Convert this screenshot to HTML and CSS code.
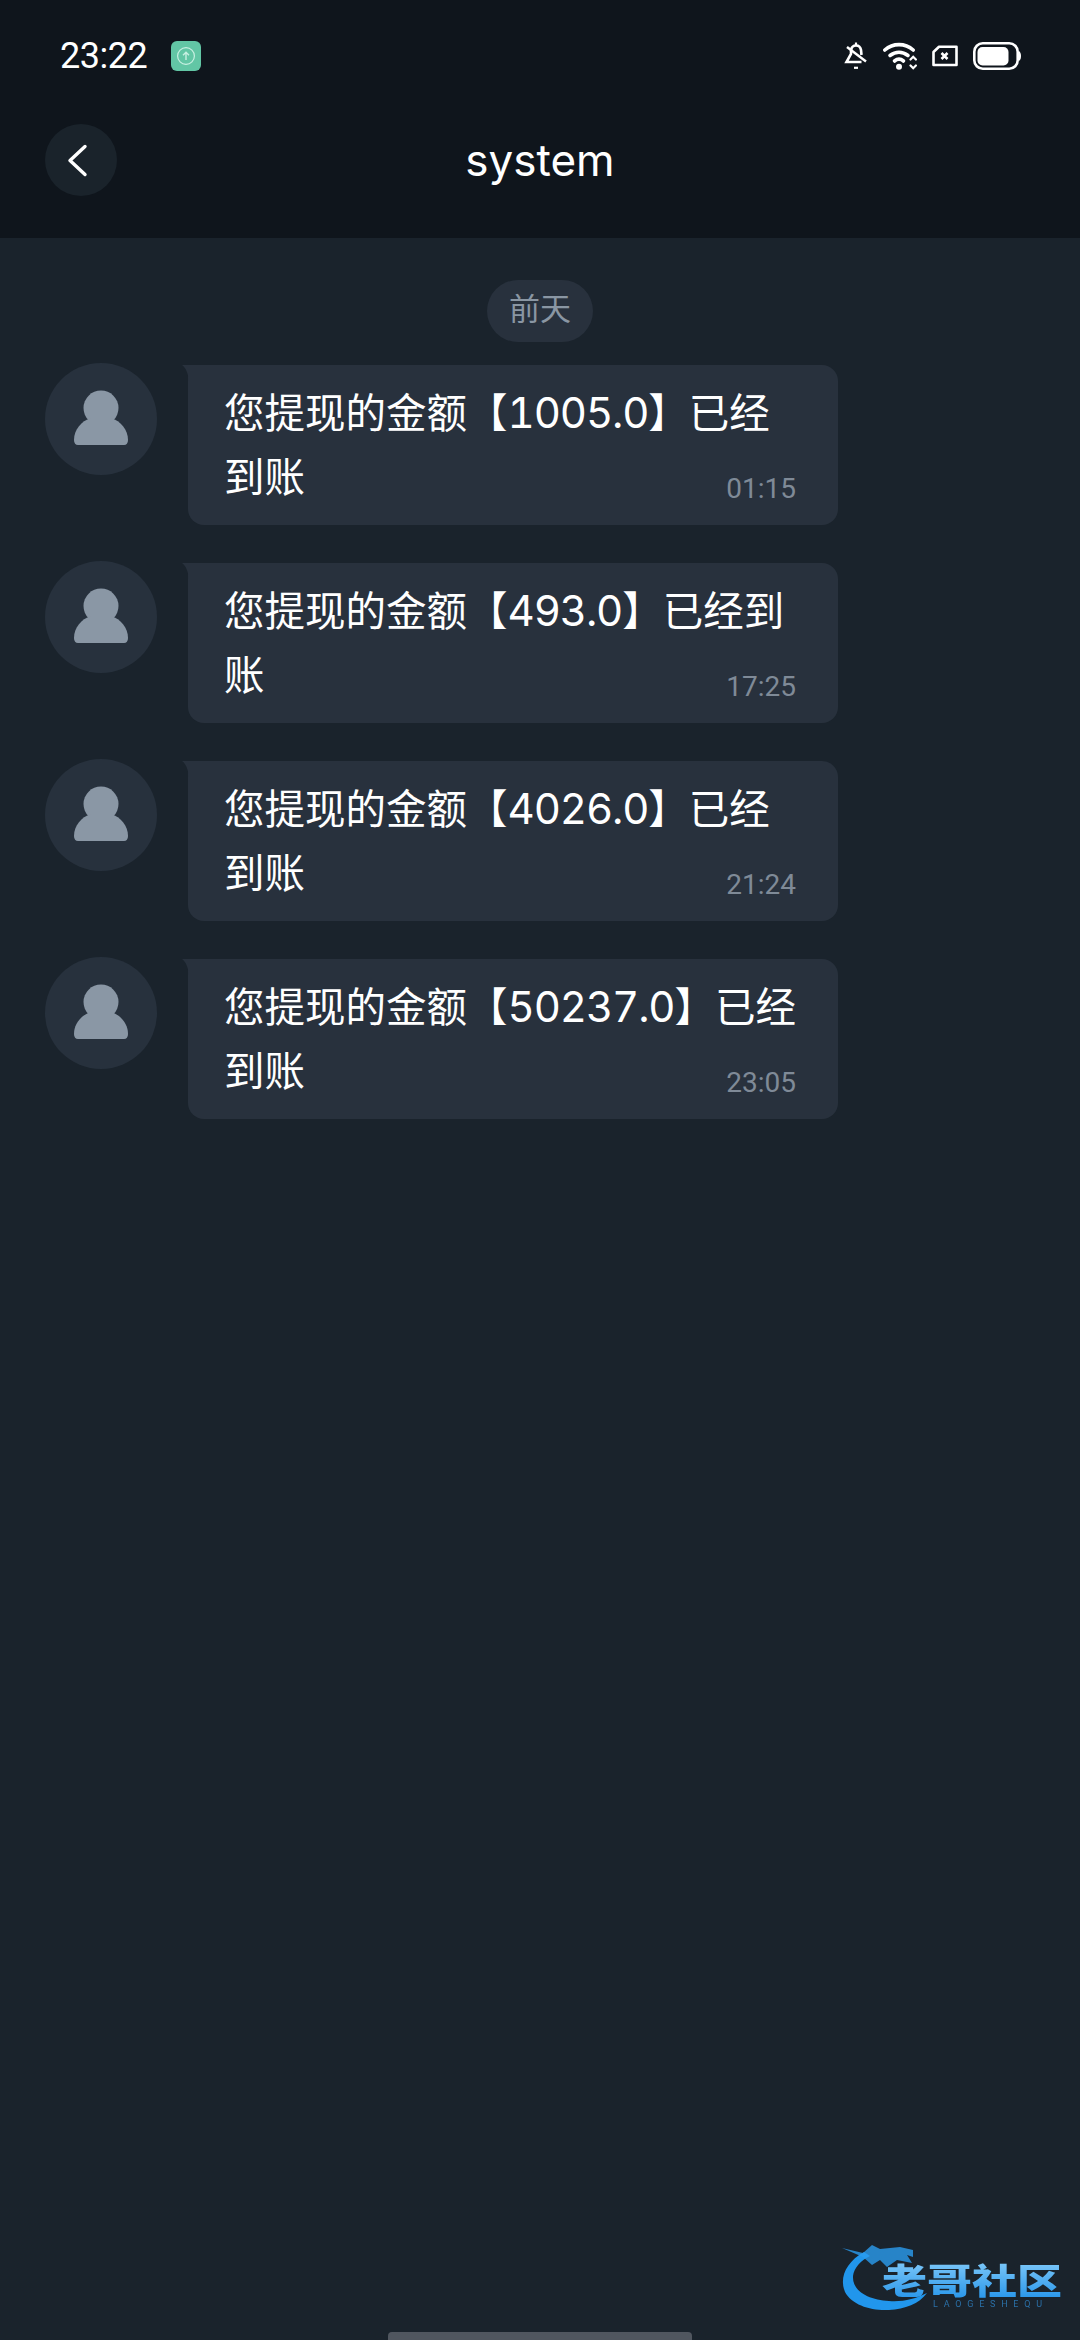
FILE: index.html
```html
<!DOCTYPE html>
<html lang="zh-CN">

<head>
    <meta charset="UTF-8">
    <meta name="viewport" content="width=device-width, initial-scale=1.0">
    <title>system</title>
    <link rel="stylesheet" href="styles.css">
</head>

<body>
    <div class="page">
        <div class="top">
            <div class="status-bar">
                <span class="clock">23:22</span>
                <span class="app-badge">
                    <svg width="20" height="20" viewBox="0 0 20 20" fill="none" stroke="#c8f0e2" stroke-width="1.2">
                        <circle cx="10" cy="10" r="8.4"/>
                        <path d="M10 14V6.4M7 9.2l3-3 3 3" stroke-width="1.4"/>
                    </svg>
                </span>
                <div class="status-icons">
                    <!-- muted bell -->
                    <svg width="24" height="28" viewBox="0 0 24 28" fill="none" stroke="#fff" stroke-width="2.6">
                        <path d="M7 8c.6-3 2.500-4.500 5-4.500s4.500 1.500 5 4.500l.5 5"/>
                        <path d="M7 7.500V12l-4.500 8h15"/>
                        <path d="M3 5l19 14.500" stroke-width="2.400"/>
                        <path d="M10 25.800h4" stroke-width="2.200"/>
                        <path d="M12 .5v3" stroke-width="2.200"/>
                    </svg>
                    <!-- wifi with up and down arrows -->
                    <svg width="34" height="28" viewBox="0 0 34 28" fill="none" stroke="#fff" stroke-width="3.600" stroke-linecap="round">
                        <path d="M1.800 8C10 .8 22 .8 30.200 8"/>
                        <path d="M7 13.500c5.500-4.200 12.500-4.200 18 0"/>
                        <path d="M11.500 19c3-2.400 6-2.400 9 0"/>
                        <circle cx="16" cy="24.800" r="3" fill="#fff" stroke="none"/>
                        <path d="M27.500 17.500l2.700-2.700 2.700 2.700M27.500 23.500l2.700 2.700 2.700-2.700" stroke-width="2.200"/>
                    </svg>
                    <!-- no sim -->
                    <svg width="26" height="22" viewBox="0 0 26 22" fill="none" stroke="#fff" stroke-width="2.600">
                        <path d="M7 1.800H24.500V20H1.500V7z" stroke-linejoin="round"/>
                        <path d="M9.500 8l6 6M15.500 8l-6 6" stroke-width="2.600"/>
                    </svg>
                    <!-- battery -->
                    <svg width="48" height="28" viewBox="0 0 48 28" fill="none">
                        <rect x="1.300" y="1.300" width="43.400" height="25.400" rx="8.500" stroke="#fff" stroke-width="2.600"/>
                        <rect x="4.500" y="5" width="31" height="18.500" rx="5" fill="#fff"/>
                        <path d="M46 9c1.500 1 2 3 2 5s-.5 4-2 5z" fill="#fff"/>
                    </svg>
                </div>
            </div>
            <div class="nav-bar">
                <button class="back-btn">
                    <svg width="21" height="33" viewBox="0 0 21 33" fill="none" stroke="#fff" stroke-width="3.400" stroke-linecap="round" stroke-linejoin="round">
                        <path d="M18 2.500L3 16.500l15 14"/>
                    </svg>
                </button>
                <h1 class="nav-title">system</h1>
            </div>
        </div>

        <div class="chat">
            <div class="day-row"><span class="day-pill">前天</span></div>

            <div class="msg">
                <div class="avatar">
                    <svg width="56" height="56" viewBox="0 0 56 56"><circle cx="28" cy="18" r="17.500" fill="#8a97a5"/><path d="M18 28C8 31 1 40 1 50c0 3 1.500 5 4 5h46c2.500 0 4-2 4-5 0-10-7-19-17-22z" fill="#8a97a5"/></svg>
                </div>
                <div class="bubble">
                    <p class="bubble-text">您提现的金额【<span class="amount">1005.0</span>】已经</p>
                    <div class="bubble-last">
                        <p class="bubble-text">到账</p>
                        <span class="bubble-time">01:15</span>
                    </div>
                </div>
            </div>

            <div class="msg">
                <div class="avatar">
                    <svg width="56" height="56" viewBox="0 0 56 56"><circle cx="28" cy="18" r="17.500" fill="#8a97a5"/><path d="M18 28C8 31 1 40 1 50c0 3 1.500 5 4 5h46c2.500 0 4-2 4-5 0-10-7-19-17-22z" fill="#8a97a5"/></svg>
                </div>
                <div class="bubble">
                    <p class="bubble-text">您提现的金额【<span class="amount">493.0</span>】已经到</p>
                    <div class="bubble-last">
                        <p class="bubble-text">账</p>
                        <span class="bubble-time">17:25</span>
                    </div>
                </div>
            </div>

            <div class="msg">
                <div class="avatar">
                    <svg width="56" height="56" viewBox="0 0 56 56"><circle cx="28" cy="18" r="17.500" fill="#8a97a5"/><path d="M18 28C8 31 1 40 1 50c0 3 1.500 5 4 5h46c2.500 0 4-2 4-5 0-10-7-19-17-22z" fill="#8a97a5"/></svg>
                </div>
                <div class="bubble">
                    <p class="bubble-text">您提现的金额【<span class="amount">4026.0</span>】已经</p>
                    <div class="bubble-last">
                        <p class="bubble-text">到账</p>
                        <span class="bubble-time">21:24</span>
                    </div>
                </div>
            </div>

            <div class="msg">
                <div class="avatar">
                    <svg width="56" height="56" viewBox="0 0 56 56"><circle cx="28" cy="18" r="17.500" fill="#8a97a5"/><path d="M18 28C8 31 1 40 1 50c0 3 1.500 5 4 5h46c2.500 0 4-2 4-5 0-10-7-19-17-22z" fill="#8a97a5"/></svg>
                </div>
                <div class="bubble">
                    <p class="bubble-text">您提现的金额【<span class="amount">50237.0</span>】已经</p>
                    <div class="bubble-last">
                        <p class="bubble-text">到账</p>
                        <span class="bubble-time">23:05</span>
                    </div>
                </div>
            </div>
        </div>

        <div class="home-bar"></div>

        <!-- watermark -->
        <svg class="watermark" width="226" height="76" viewBox="0 0 226 76">
            <defs>
                <linearGradient id="wm" x1="0" y1="0" x2="0" y2="1">
                    <stop offset="0" stop-color="#8fd2fc"/>
                    <stop offset="1" stop-color="#1c8fe8"/>
                </linearGradient>
            </defs>
            <path d="M24 12C6 22 -1 38 5 52c7 13 26 19 44 18 16-1 30-6 38-17-12 6-24 9-38 8C30 60 12 52 13 36c1-8 8-16 17-20z" fill="#2196ec"/>
            <polygon points="2,8 23,13 32,5 40,9 60,7 73,10 73,17 67,15 72,23 57,20 47,27 40,20 32,25 23,17" fill="#2a9cf0" opacity=".8"/>
            <text class="wm-title" fill="url(#wm)" transform="translate(42 54) scale(1 .78)">老哥社区</text>
            <text x="93" y="67" class="wm-sub" textLength="109">LAOGESHEQU</text>
        </svg>
    </div>
</body>

</html>
```

FILE: styles.css
```css
* {
    box-sizing: border-box;
}

body {
    margin: 0;
    background-color: #1a232c;
    font-family: Roboto, "Noto Sans CJK SC", sans-serif;
}

.page {
    position: relative;
    display: flex;
    flex-direction: column;
    width: 1080px;
    height: 2340px;
    overflow: hidden;
    background-color: #1a232c;
}

.top {
    height: 238px;
    flex-shrink: 0;
    background-color: #0f151c;
}

.status-bar {
    display: flex;
    align-items: center;
    height: 112px;
    padding: 0 59px 0 60px;
}

.clock {
    width: 111px;
    color: #fff;
    font-size: 36px;
    letter-spacing: -0.5px;
}

.app-badge {
    display: flex;
    align-items: center;
    justify-content: center;
    width: 30px;
    height: 30px;
    border-radius: 6px;
    background-color: #62c6a5;
}

.status-icons {
    display: flex;
    align-items: center;
    gap: 15px;
    margin-left: auto;
}

.nav-bar {
    display: flex;
    align-items: center;
    height: 72px;
    margin-top: 12px;
    padding-left: 45px;
}

.back-btn {
    display: flex;
    align-items: center;
    justify-content: center;
    width: 72px;
    height: 72px;
    padding: 0 7px 0 0;
    border: none;
    border-radius: 50%;
    background-color: #1a232b;
}

.nav-title {
    flex: 1;
    margin: 0 117px 0 0;
    color: #fff;
    font-family: Inter, sans-serif;
    font-size: 44px;
    font-weight: 400;
    text-align: center;
}

.chat {
    display: flex;
    flex-direction: column;
    gap: 38px;
    padding: 42px 45px 0;
}

.day-row {
    display: flex;
    justify-content: center;
    margin-bottom: -15px;
}

.day-pill {
    height: 62px;
    padding: 0 22px;
    border-radius: 31px;
    background-color: #28313d;
    color: #8a96a3;
    font-size: 31px;
    line-height: 60px;
}

.msg {
    display: flex;
    align-items: flex-start;
    gap: 31px;
}

.avatar {
    display: flex;
    align-items: center;
    justify-content: center;
    flex-shrink: 0;
    width: 112px;
    height: 112px;
    margin-top: -2px;
    padding-bottom: 2px;
    border-radius: 50%;
    background-color: #27313d;
}

.bubble {
    position: relative;
    width: 650px;
    height: 160px;
    padding: 17px 42px 0 36px;
    border-radius: 0 16px 16px 16px;
    background-color: #28313d;
}

/* little tail at the top left corner */
.bubble::before {
    content: "";
    position: absolute;
    top: 0;
    left: -6px;
    width: 7px;
    height: 16px;
    background-color: #28313d;
    clip-path: path("M0 0H7V16C6 8 4 3 0 0Z");
}

.bubble-text {
    margin: 0;
    color: #fff;
    font-family: Inter, "Noto Sans CJK SC", sans-serif;
    font-size: 40.5px;
    line-height: 64px;
    white-space: nowrap;
}

.amount {
    font-size: 42px;
    font-variant-numeric: tabular-nums;
    letter-spacing: -1.1px;
    line-height: 1;
}

.bubble-last {
    display: flex;
    justify-content: space-between;
}

.bubble-time {
    align-self: flex-end;
    margin-bottom: 3px;
    color: #7f8a97;
    font-size: 28px;
    line-height: 36px;
}

.home-bar {
    width: 304px;
    height: 8px;
    margin: auto auto 0;
    border-radius: 4px 4px 0 0;
    background-color: #50565f;
}

.watermark {
    position: absolute;
    right: 14px;
    bottom: 24px;
    filter: blur(0.6px);
}

.wm-title {
    font-family: "Noto Sans CJK SC", sans-serif;
    font-size: 45px;
    font-weight: 900;
}

.wm-sub {
    fill: #2a6fa6;
    font-family: Roboto, sans-serif;
    font-size: 9px;
}
```
